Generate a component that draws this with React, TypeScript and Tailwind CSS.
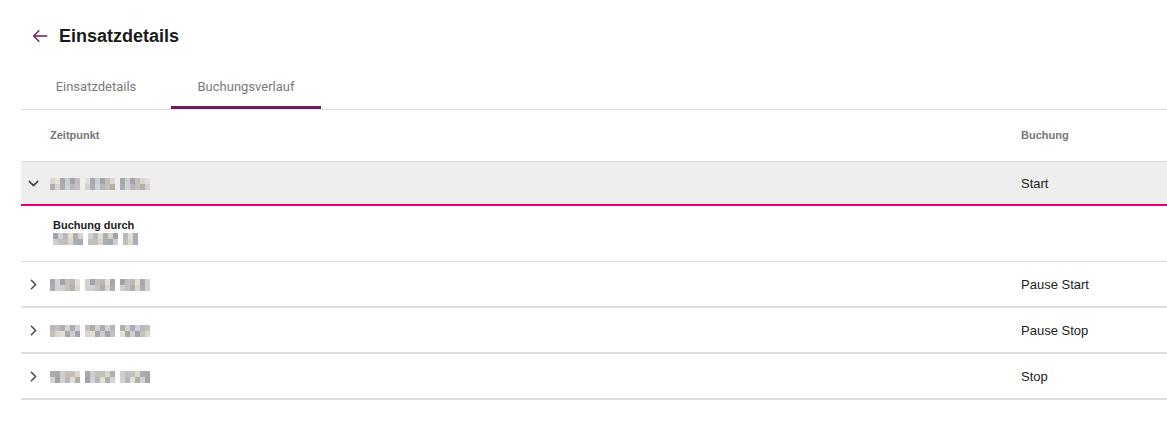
import { ChevronDown, ChevronRight } from 'lucide-react';

// Greys used for the pixelated (anonymised) values
const tones = ['#c3c0bd', '#b1afac', '#d6d3cf', '#a2a2ad', '#c4c0b8', '#dcd6cc', '#aaadb6', '#cfd3d6', '#bab6bd', '#e4e0d8', '#a4aaaa', '#d0ccd2'];

const Mosaic = ({ seed, cols }: { seed: number; cols: number }) => {
  const cells = Array.from({ length: cols * 2 }, (_, i) => {
    const col = Math.floor(i / 2);
    const gap = col % 7 === 6;
    return gap ? 'transparent' : tones[(i * 7 + seed * 5 + (i % 3)) % tones.length];
  });
  return (
    <div className="inline-grid grid-rows-2 grid-flow-col auto-cols-[5px] align-middle">
      {cells.map((c, i) => (
        <span key={i} className="w-[5px] h-[6px]" style={{ backgroundColor: c }} />
      ))}
    </div>
  );
};

const rows = [
  { seed: 2, booking: 'Pause Start' },
  { seed: 4, booking: 'Pause Stop' },
  { seed: 6, booking: 'Stop' },
];

export default function App() {
  return (
    <div className="min-h-screen bg-white font-['Liberation_Sans',Arial,sans-serif] text-[#222]">
      <div className="pl-[21px] pt-[25px]">
        {/* Page title */}
        <div className="flex items-center gap-[10px] pl-[10px] h-[22px]">
          <svg width="18" height="18" viewBox="0 0 24 24" className="text-[#6b1d5c]" fill="none" stroke="currentColor" strokeWidth="1.8" strokeLinecap="round" strokeLinejoin="round">
            <path d="M21 12H3.5M10.5 5l-7 7 7 7" />
          </svg>
          <h1 className="text-[18px] font-bold text-[#1a1a1a]">Einsatzdetails</h1>
        </div>

        {/* Tabs */}
        <div className="mt-[18px] flex border-b border-[#e0e0e0] font-['Roboto',sans-serif]">
          <div className="w-[150px] h-[44px] flex items-center justify-center text-[13px] text-[#7a7a7a]">Einsatzdetails</div>
          <div className="w-[150px] h-[44px] flex items-center justify-center text-[13px] text-[#7a7a7a] border-b-[3px] border-[#6b1d5c] pt-[3px] -mb-px">Buchungsverlauf</div>
        </div>

        {/* Booking table */}
        <div>
          <div className="h-[52px] flex items-center border-b border-[#e0e0e0] text-[11px] font-bold text-[#777]">
            <div className="w-[29px]" />
            <div className="flex-1">Zeitpunkt</div>
            <div className="w-[146px]">Buchung</div>
          </div>

          {/* Expanded row */}
          <div className="h-[44px] flex items-center bg-[#eeeeee] border-b-2 border-[#e20074] text-[13px] pt-[1px]">
            <div className="w-[29px] pl-[4px]">
              <ChevronDown size={17} strokeWidth={2} className="text-[#444]" />
            </div>
            <div className="flex-1 flex">
              <Mosaic seed={1} cols={21} />
            </div>
            <div className="w-[146px]">Start</div>
          </div>
          <div className="h-[56px] pl-[32px] pt-[12px] border-b border-[#e0e0e0]">
            <div className="text-[11px] font-bold text-[#222] leading-[14px]">Buchung durch</div>
            <div className="mt-[1px] flex">
              <Mosaic seed={3} cols={17} />
            </div>
          </div>

          {rows.map((r) => (
            <div key={r.seed} className="h-[46px] flex items-center border-b-2 border-[#e0e0e0] text-[13px] pt-[1px]">
              <div className="w-[29px] pl-[4px]">
                <ChevronRight size={17} strokeWidth={2} className="text-[#444]" />
              </div>
              <div className="flex-1 flex">
                <Mosaic seed={r.seed} cols={21} />
              </div>
              <div className="w-[146px]">{r.booking}</div>
            </div>
          ))}
        </div>
      </div>
    </div>
  );
}
